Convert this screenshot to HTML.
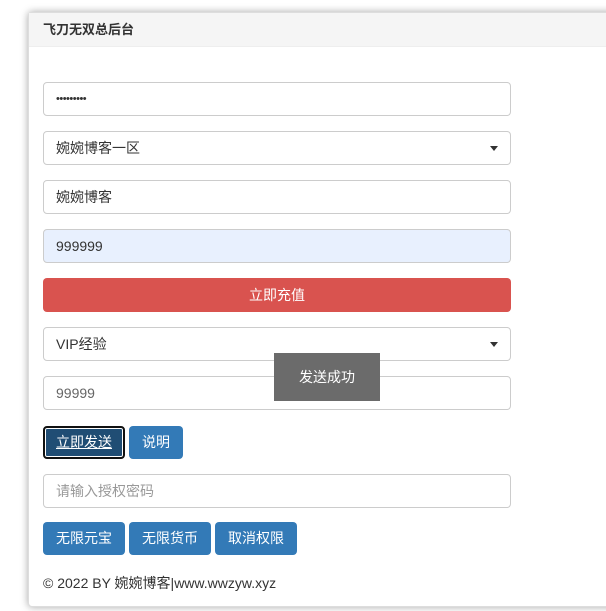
<!DOCTYPE html>
<html><head><meta charset="utf-8"><style>
body{margin:0;background:#fff;font-family:"Liberation Sans","Noto Sans CJK SC",sans-serif;font-size:14px;color:#333;width:606px;height:611px;overflow:hidden;position:relative}
.panel{position:absolute;left:28px;top:12px;width:640px;height:593px;border:1px solid #ddd;border-radius:4px;box-shadow:0 0 8px rgba(0,0,0,.35);background:#fff}
.hd{height:33px;background:#f5f5f5;border-bottom:1px solid #eee;font-weight:bold;font-size:13px;line-height:34px;padding-left:14px;color:#333}
.f{position:absolute;left:14px;width:466px;height:32px;border:1px solid #ccc;border-radius:4px;line-height:32px;padding-left:12px;box-sizing:content-box;width:454px;background:#fff}
.caret{position:absolute;right:12px;top:14px;border-left:4px solid transparent;border-right:4px solid transparent;border-top:5px solid #333}
.btn{position:absolute;height:33px;line-height:33px;color:#fff;background:#337ab7;border-radius:4px;text-align:center;font-size:14px}
</style></head><body>
<div class="panel">
<div class="hd">飞刀无双总后台</div>
<div class="f" style="top:69px;font-size:11px;letter-spacing:-.5px">•••••••••</div>
<div class="f" style="top:118px">婉婉博客一区<span class="caret"></span></div>
<div class="f" style="top:167px">婉婉博客</div>
<div class="f" style="top:216px;background:#e8f0fe">999999</div>
<div class="btn" style="left:14px;top:265px;width:468px;height:34px;line-height:34px;background:#d9534f">立即充值</div>
<div class="f" style="top:314px">VIP经验<span class="caret"></span></div>
<div class="f" style="top:363px;color:#666">99999</div>
<div class="btn" style="left:14px;top:413px;width:82px;height:33px;box-sizing:border-box;background:#204d74;border:2px solid #111;box-shadow:0 0 0 1px #fff inset;line-height:29px;text-decoration:underline">立即发送</div>
<div class="btn" style="left:100px;top:413px;width:54px">说明</div>
<div class="f" style="top:461px;color:#999">请输入授权密码</div>
<div class="btn" style="left:14px;top:509px;width:82px">无限元宝</div>
<div class="btn" style="left:100px;top:509px;width:82px">无限货币</div>
<div class="btn" style="left:186px;top:509px;width:82px">取消权限</div>
<div style="position:absolute;left:14px;top:560px;font-size:14px">© 2022 BY 婉婉博客|www.wwzyw.xyz</div>
</div>
<div style="position:absolute;left:274px;top:353px;width:106px;height:48px;background:#6b6b6b;color:#fff;text-align:center;line-height:48px;font-size:14px">发送成功</div>
</body></html>
